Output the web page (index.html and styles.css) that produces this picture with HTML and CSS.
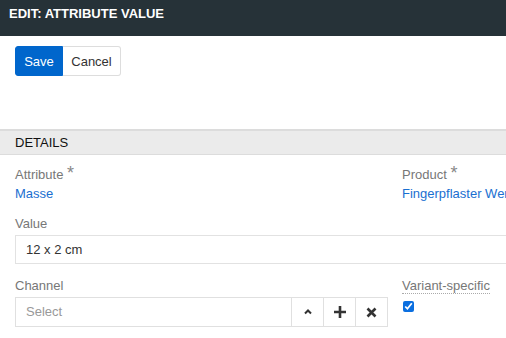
FILE: index.html
```html
<!DOCTYPE html>
<html lang="en">
<head>
    <meta charset="UTF-8">
    <title>Edit: Attribute Value</title>
    <link rel="stylesheet" href="styles.css">
</head>
<body>
    <div class="topbar">EDIT: ATTRIBUTE VALUE</div>

    <div class="toolbar">
        <button class="btn btn-primary">Save</button>
        <button class="btn">Cancel</button>
    </div>

    <div class="section-title">DETAILS</div>

    <div class="form">
        <div class="row">
            <div class="field">
                <div class="label">Attribute <span class="req">*</span></div>
                <a class="link">Masse</a>
            </div>
            <div class="field side">
                <div class="label">Product <span class="req">*</span></div>
                <a class="link">Fingerpflaster Wer</a>
            </div>
        </div>

        <div class="field">
            <div class="label">Value</div>
            <input class="input" type="text" value="12 x 2 cm">
        </div>

        <div class="row">
            <div class="field">
                <div class="label">Channel</div>
                <div class="select">
                    <span class="placeholder">Select</span>
                    <span class="select-btn">
                        <svg width="10" height="10" viewBox="0 0 10 10"><path d="M2 6.5 L5 3.5 L8 6.5" fill="none" stroke="#333" stroke-width="2"/></svg>
                    </span>
                    <span class="select-btn">
                        <svg width="14" height="14" viewBox="0 0 14 14"><path d="M7 1 V13 M1 7 H13" stroke="#333" stroke-width="2.6"/></svg>
                    </span>
                    <span class="select-btn">
                        <svg width="11" height="11" viewBox="0 0 11 11"><path d="M1.5 1.5 L9.5 9.5 M9.5 1.5 L1.5 9.5" stroke="#333" stroke-width="2.6"/></svg>
                    </span>
                </div>
            </div>
            <div class="field side">
                <div class="label"><span class="dotted">Variant-specific</span></div>
                <input class="check" type="checkbox" checked>
            </div>
        </div>
    </div>
</body>
</html>
```

FILE: styles.css
```css
body {
    margin: 0;
    font-family: "Liberation Sans", Arial, sans-serif;
    font-size: 13px;
    color: #333;
    background: #fff;
    overflow: hidden;
}

.topbar {
    background-color: #263238;
    color: #fff;
    font-weight: bold;
    font-size: 13px;
    height: 36px;
    line-height: 28px;
    padding-left: 9px;
    box-sizing: border-box;
}

.toolbar {
    display: flex;
    padding: 10px 15px 0;
    height: 93px;
    box-sizing: border-box;
}

.btn {
    font-family: inherit;
    font-size: 13px;
    height: 30px;
    padding: 0;
    border: 1px solid #ddd;
    background: #fff;
    color: #333;
    border-radius: 0 3px 3px 0;
    margin: 0;
}

.btn-primary {
    width: 48px;
    background-color: #0066cc;
    border-color: #0066cc;
    color: #fff;
    border-radius: 3px 0 0 3px;
}

.btn + .btn {
    width: 58px;
    border-left: none;
}

.section-title {
    background: #ebebeb;
    border-top: 2px solid #dcdcdc;
    border-bottom: 1px solid #dcdcdc;
    height: 23px;
    line-height: 24px;
    padding-left: 15px;
    color: #111;
    font-size: 13px;
}

.form {
    padding: 11px 0 0 15px;
}

.row {
    display: flex;
}

.field {
    margin-bottom: 13px;
}

.row .field:first-child {
    width: 387px;
    flex-shrink: 0;
}

.side {
    white-space: nowrap;
}

.label {
    color: #777;
    line-height: 18px;
    margin-bottom: 2px;
}

.req {
    color: #888;
    font-size: 18px;
    line-height: 10px;
    position: relative;
    top: 0;
}

.link {
    color: #1a6fd1;
    display: block;
    line-height: 16px;
}

.input {
    display: block;
    width: 520px;
    height: 29px;
    box-sizing: border-box;
    border: 1px solid #e2e2e2;
    padding: 0 10px;
    font-family: inherit;
    font-size: 13px;
    color: #333;
    margin-top: 1px;
}

.select {
    display: flex;
    height: 30px;
    box-sizing: border-box;
    border: 1px solid #e0e0e0;
    width: 373px;
    margin-top: 2px;
}

.placeholder {
    flex: 1;
    color: #999;
    line-height: 28px;
    padding-left: 10px;
}

.select-btn {
    width: 31px;
    border-left: 1px solid #e0e0e0;
    display: flex;
    align-items: center;
    justify-content: center;
}

.dotted {
    border-bottom: 1px dotted #aaa;
}

.check {
    margin: 4px 0 0 1px;
    width: 11px;
    height: 11px;
    accent-color: #0b6fe0;
}
```
